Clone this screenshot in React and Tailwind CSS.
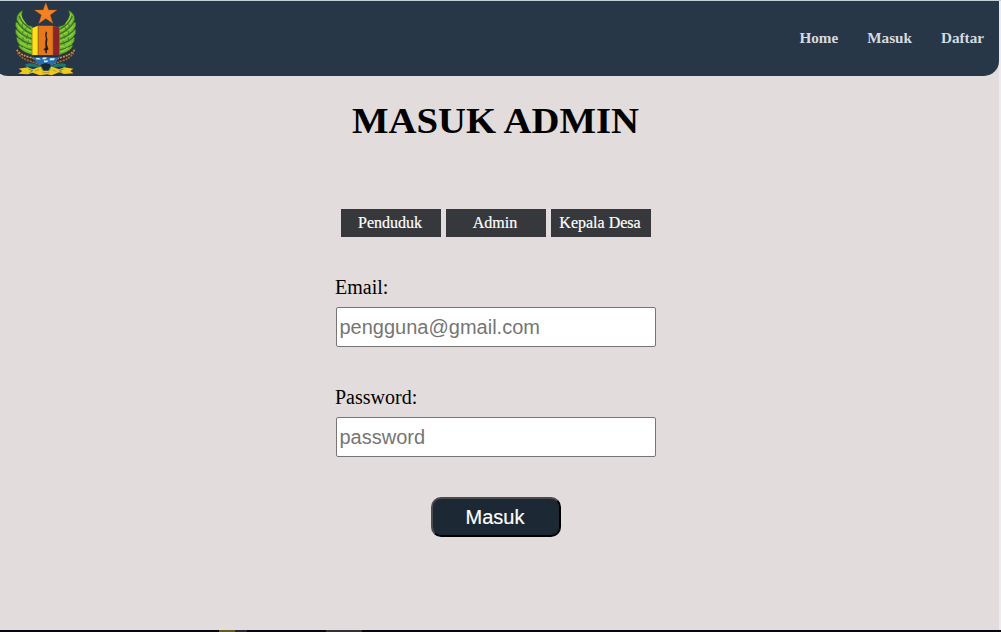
import React from "react";

function Wing() {
  return (
    <g>
      <path
        d="M69 32 L59 38 L52 49 L51 61 L56 68 L48 67 L47 77 L53 90 L47 89 L48 101 L56 113 L50 112 L53 126 L61 137 L55 137 L63 149 L78 158 L98 165 L98 80 L86 77 L76 69 L70 58 L66 47 Z"
        fill="#72b832"
        stroke="#2c5c2c"
        strokeWidth="2"
      />
      <path
        d="M58 49 Q66 72 94 88 M54 68 Q68 90 96 103 M53 90 Q68 108 96 117 M56 113 Q72 128 96 133 M62 137 Q78 148 96 150"
        fill="none"
        stroke="#36702a"
        strokeWidth="3.5"
      />
      <path
        d="M62 43 Q66 60 78 72 M59 61 Q69 79 94 94 M55 79 Q70 98 94 109 M56 101 Q72 117 94 124 M61 125 Q76 138 94 141 M70 143 Q82 152 94 156"
        fill="none"
        stroke="#9ed23a"
        strokeWidth="3"
      />
      <path
        d="M69 70 L67 84 M80 81 L76 96 M71 92 L67 106 M84 103 L80 117 M70 112 L69 126 M86 122 L82 137"
        fill="none"
        stroke="#3c7d2c"
        strokeWidth="2.5"
      />
    </g>
  );
}

function Garland() {
  return (
    <g fill="none">
      <path d="M54 150 Q66 171 94 179 L128 196" stroke="#3a2d27" strokeWidth="17" />
      <path d="M51 150 Q65 168 95 173 L128 187" stroke="#b5966a" strokeWidth="5" strokeDasharray="6 3" />
      <path d="M54 158 Q65 177 93 184 L122 195" stroke="#986d42" strokeWidth="5" strokeDasharray="6 3" />
      <path d="M78 198 Q96 190 120 202" stroke="#1d7770" strokeWidth="9" />
    </g>
  );
}

function Crest() {
  return (
    <svg viewBox="46 7 182 221" preserveAspectRatio="none" className="h-[74px] w-[61px]" aria-hidden="true">
      <Wing />
      <g transform="translate(275 0) scale(-1 1)">
        <Wing />
      </g>
      <Garland />
      <g transform="translate(275 0) scale(-1 1)">
        <Garland />
      </g>
      <path d="M98 85 L115 78 H160 L178 85 V166 H98 Z" fill="#e7781c" />
      <path d="M98 85 L115 78 V166 H98 Z" fill="#fae317" />
      <path d="M160 78 L178 85 V166 H160 Z" fill="#8a2428" />
      <path d="M115 79 V166 M160 79 V166" stroke="#69401c" strokeWidth="2" />
      <path d="M98 166 H178 Q174 188 150 198 L138 202 L126 198 Q103 189 98 166 Z" fill="#276eb0" />
      <path d="M98 166 H178 L175 172 H101 Z" fill="#153052" />
      <path
        d="M107 174 h11 l5 5 h-12 Z M130 173 h12 l-5 5 h-10 Z M151 175 h15 l-5 6 h-12 Z M132 182 h14 l-5 5 h-8 Z"
        fill="#d7eef2"
      />
      <path d="M124 194 L138 189 L152 194 V214 H124 Z" fill="#17283a" />
      <path
        d="M138 94 L142 99 L140 108 L143 119 L141 131 L143 140 L146 148 L141 152 L141 161 L136 158 L137 151 L132 151 L132 147 L137 144 L136 128 L138 117 L136 106 Z"
        fill="#291c18"
      />
      <path
        d="M138 9 L146 31 L171 31 L151 46 L159 71 L138 56 L117 71 L125 46 L104 31 L130 31 Z"
        fill="#f58220"
        stroke="#bd5b19"
        strokeWidth="1"
      />
      <path
        d="M57 206 L84 202 L99 208 L124 200 L131 212 L146 212 L153 200 L178 208 L193 202 L220 206 L211 213 L221 220 L192 222 L178 217 L155 226 L142 223 L120 226 L99 218 L84 223 L55 221 L68 213 Z"
        fill="#f0c91f"
      />
      <path d="M86 207 L98 212 L90 218 M190 207 L179 212 L187 218 M124 203 L131 214 M153 203 L146 214" stroke="#5c9b4e" strokeWidth="3" fill="none" />
      <path d="M105 213 L118 209 M158 210 L170 214 M128 218 H149" stroke="#a9821b" strokeWidth="2" />
    </svg>
  );
}

const field =
  "block h-10 w-80 rounded-[2px] border border-[#767676] bg-white pr-[3px] pl-[2.5px] py-0 font-['Liberation_Sans',Arial,sans-serif] text-[20px] text-black placeholder:text-[#757575] outline-none";

const tab = "flex h-7 w-[100px] items-center justify-center bg-[#36383c] pr-[2px]";

export default function App() {
  return (
    <div className="flex h-[632px] w-[1001px] flex-col overflow-hidden bg-[#e2dcdc] font-['Liberation_Serif','Times_New_Roman',serif] text-black">
      <div className="flex flex-1 border-t border-[#c3d0d8]">
        <div className="flex w-[999px] flex-col">
          <header className="-ml-[7px] flex h-[75px] items-center justify-between rounded-b-[15px] bg-[#283747] pr-[15px] pl-[22px]">
            <Crest />
            <nav className="flex gap-[29px] pb-[2px] text-[15.2px] leading-[18px] font-bold text-[#d5dbe0]">
              <a href="#home">Home</a>
              <a href="#masuk">Masuk</a>
              <a href="#daftar">Daftar</a>
            </nav>
          </header>
          <main className="flex w-[992px] flex-col items-center">
            <h1 className="mt-[23px] mr-[2px] scale-x-[1.075] text-[36px] leading-[44px] font-bold">MASUK ADMIN</h1>
            <div className="mt-[66px] flex gap-[5px] text-[16px] text-white [-webkit-text-stroke:0.2px_white]">
              <a href="#penduduk" className={tab}>Penduduk</a>
              <a href="#admin" className={tab}>Admin</a>
              <a href="#kepala" className={tab}>Kepala Desa</a>
            </div>
            <form className="mt-[39px] flex w-80 flex-col">
              <label htmlFor="email" className="-ml-px text-[20px] leading-[23px]">Email:</label>
              <input id="email" type="email" placeholder="pengguna@gmail.com" className={`${field} mt-2`} />
              <label htmlFor="password" className="mt-[39px] -ml-px text-[20px] leading-[23px]">Password:</label>
              <input id="password" type="password" placeholder="password" className={`${field} mt-2`} />
              <button
                type="button"
                className="mt-10 h-10 w-[130px] self-center rounded-[10px] border-2 border-t-[#4b4b4d] border-r-black border-b-black border-l-[#4b4b4d] bg-[#1c2833] pr-[2px] font-['Liberation_Sans',Arial,sans-serif] text-[20px] leading-none text-white [-webkit-text-stroke:0.2px_white]"
              >
                Masuk
              </button>
            </form>
          </main>
        </div>
        <div className="w-[2px] bg-[#eeeaee]" />
      </div>
      <div className="flex h-[2px] bg-[#08070d]">
        <div className="ml-[219px] h-full w-4 bg-[#635d23]" />
        <div className="h-full w-3 bg-[#29272d]" />
        <div className="ml-[79px] h-full w-9 bg-[#343136]" />
      </div>
    </div>
  );
}
